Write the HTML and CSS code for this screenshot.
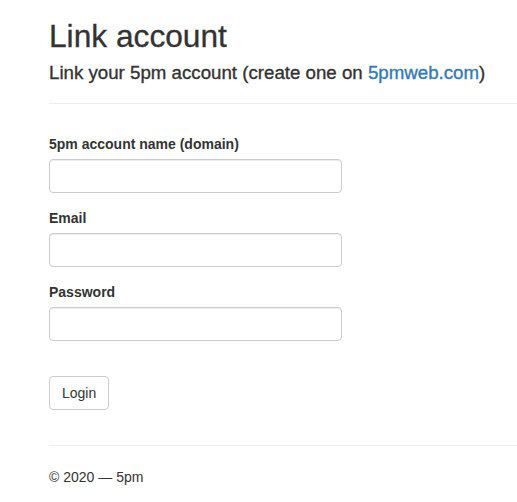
FILE: index.html
```html
<!DOCTYPE html>
<html lang="en">
<head>
<meta charset="utf-8">
<title>Link account</title>
<link rel="stylesheet" href="styles.css">
</head>
<body>
<div class="page">
  <h1 class="title">Link account</h1>
  <p class="subtitle">Link your 5pm account (create one on <a href="#">5pmweb.com</a>)</p>
  <hr class="rule">
  <form class="form">
    <div class="group">
      <label class="label" for="domain">5pm account name (domain)</label>
      <input class="control" id="domain" type="text">
    </div>
    <div class="group">
      <label class="label" for="email">Email</label>
      <input class="control" id="email" type="email">
    </div>
    <div class="group">
      <label class="label" for="password">Password</label>
      <input class="control" id="password" type="password">
    </div>
    <div class="actions">
      <button class="btn" type="button">Login</button>
    </div>
  </form>
  <hr class="rule rule-footer">
  <footer class="footer">© 2020 — 5pm</footer>
</div>
</body>
</html>
```

FILE: styles.css
```css
html, body {
  margin: 0;
  padding: 0;
  background: #fff;
}
body {
  font-family: "Liberation Sans", Arial, sans-serif;
  font-size: 14px;
  line-height: 20px;
  color: #333;
}
.page {
  padding: 0 0 0 49px;
}
.title {
  margin: 20px 0 10px;
  font-size: 31.7px;
  line-height: 33px;
  font-weight: normal;
  -webkit-text-stroke: 0.3px #333;
}
.subtitle {
  margin: 0;
  font-size: 18.7px;
  line-height: 20px;
  -webkit-text-stroke: 0.35px #333;
}
.subtitle a {
  color: #337ab7;
  text-decoration: none;
  -webkit-text-stroke: 0.35px #337ab7;
}
.rule {
  margin: 20px 0 0;
  border: 0;
  border-top: 1px solid #eee;
  height: 0;
}
.form {
  padding-top: 30px;
}
.group {
  margin-bottom: 15px;
}
.label {
  display: block;
  font-weight: bold;
  margin-bottom: 5px;
}
.control {
  display: block;
  box-sizing: border-box;
  width: 293px;
  height: 34px;
  margin: 0;
  padding: 6px 12px;
  border: 1px solid #ccc;
  border-radius: 4px;
  box-shadow: inset 0 1px 1px rgba(0,0,0,.075);
  font: inherit;
  color: #555;
  background: #fff;
}
.actions {
  padding-top: 20px;
}
.btn {
  box-sizing: border-box;
  height: 34px;
  padding: 6px 12px;
  border: 1px solid #ccc;
  border-radius: 4px;
  background: #fff;
  color: #333;
  font: inherit;
  margin: 0;
}
.rule-footer {
  margin-top: 35px;
}
.footer {
  padding-top: 21px;
  padding-bottom: 20px;
}
```
